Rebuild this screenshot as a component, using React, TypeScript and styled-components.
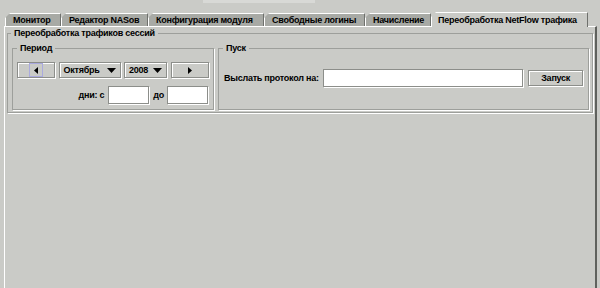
import styled, { createGlobalStyle } from "styled-components";

const GlobalStyle = createGlobalStyle`
    html, body {
        margin: 0;
        padding: 0;
        background: #cacbc7;
    }
    body {
        font-family: "Liberation Sans", Arial, sans-serif;
        font-size: 9px;
        font-weight: bold;
        letter-spacing: -0.25px;
        color: #000;
    }
`;

const Window = styled.div`
    width: 600px;
    height: 288px;
    overflow: hidden;
    display: flex;
    flex-direction: column;
    background: #cacbc7;
`;

const TopStrip = styled.div`
    height: 12px;
    display: flex;
`;

const StripLight = styled.div`
    margin-left: 203px;
    width: 112px;
    height: 3px;
    background: #d8d9d6;
`;

const TabBar = styled.div`
    height: 14px;
    display: flex;
    align-items: flex-end;
    padding-left: 5px;
`;

const Tab = styled.div<{ $active?: boolean; $w: number }>`
    box-sizing: border-box;
    width: ${(p) => p.$w}px;
    height: ${(p) => (p.$active ? 15 : 13)}px;
    margin-bottom: ${(p) => (p.$active ? -1 : 0)}px;
    position: relative;
    z-index: ${(p) => (p.$active ? 2 : 1)};
    background: ${(p) => (p.$active ? "#cacbc7" : "#a8aaa5")};
    border-top: 1px solid #fff;
    border-left: 1px solid #fff;
    border-right: 1px solid #6f716d;
    clip-path: polygon(5px 0, 100% 0, 100% 100%, 0 100%, 0 5px);
    display: flex;
    align-items: center;
    padding-left: ${(p) => (p.$active ? 6 : 7)}px;
    padding-bottom: ${(p) => (p.$active ? 1 : 0)}px;
    white-space: nowrap;
`;

const Panel = styled.div`
    flex: 1;
    margin-left: 4px;
    width: 593px;
    box-sizing: border-box;
    border-top: 1px solid #fff;
    border-left: 1px solid #fff;
    border-right: 2px solid #5f615d;
    padding: 0 2px 0 2px;
`;

const Group = styled.fieldset`
    margin: 0;
    padding: 0;
    min-width: 0;
    border: 1px solid #9d9f9b;
    box-shadow: 1px 1px 0 #fff;
`;

const Title = styled.legend<{ $inset?: number }>`
    margin-left: ${(p) => p.$inset ?? 3}px;
    padding: 0 3px;
    line-height: 12px;
`;

const OuterBody = styled.div`
    display: grid;
    grid-template-columns: 202px 1fr;
    gap: 4px;
    padding: 3px 3px 2px 4px;
`;

const PeriodBody = styled.div`
    display: flex;
    flex-direction: column;
    gap: 8px;
    padding: 8px 4px 5px 4px;
`;

const Row = styled.div`
    display: flex;
    align-items: center;
`;

const DaysRow = styled(Row)`
    justify-content: flex-end;
    padding-right: 1px;
`;

const Button = styled.button<{ $w: number }>`
    box-sizing: border-box;
    width: ${(p) => p.$w}px;
    height: 16px;
    margin: 0;
    padding: 0;
    background: #cacbc7;
    border: 1px solid #8c8e8a;
    box-shadow: inset 1px 1px 0 #fff, 1px 1px 0 #fff;
    display: flex;
    align-items: center;
    justify-content: center;
    font-family: inherit;
    font-size: 9px;
    font-weight: bold;
    letter-spacing: -0.25px;
    color: #000;
`;

const Focus = styled.span`
    box-sizing: border-box;
    width: 14px;
    height: 14px;
    border: 1px solid #aaaade;
    display: flex;
    align-items: center;
    justify-content: center;
`;

const Combo = styled.div<{ $w: number }>`
    box-sizing: border-box;
    width: ${(p) => p.$w}px;
    height: 16px;
    border: 1px solid #8c8e8a;
    box-shadow: inset 1px 1px 0 #fff, 1px 1px 0 #fff;
    display: flex;
    align-items: center;
    justify-content: space-between;
    padding: 0 4px 0 4px;
`;

const Field = styled.div<{ $w: number }>`
    box-sizing: border-box;
    width: ${(p) => p.$w}px;
    height: 18px;
    background: #fff;
    border: 1px solid #8c8e8a;
    box-shadow: 1px 1px 0 #fff;
`;

const Label = styled.span<{ $ml?: number; $mr?: number }>`
    margin-left: ${(p) => p.$ml ?? 0}px;
    margin-right: ${(p) => p.$mr ?? 0}px;
    white-space: nowrap;
`;

const StartBody = styled.div`
    display: flex;
    align-items: center;
    padding: 15px 5px 0 5px;
`;

const Arrow = ({ dir }: { dir: "left" | "right" | "down" }) => {
    if (dir === "down") {
        return (
            <svg width="9" height="5" viewBox="0 0 9 5">
                <polygon points="0,0 9,0 4.5,5" fill="#000" />
            </svg>
        );
    }
    return (
        <svg width="4" height="7" viewBox="0 0 4 7">
            <polygon points={dir === "left" ? "4,0 4,7 0,3.5" : "0,0 0,7 4,3.5"} fill="#000" />
        </svg>
    );
};

const tabs = [
    { name: "Монитор", w: 56 },
    { name: "Редактор NASов", w: 87 },
    { name: "Конфигурация модуля", w: 116 },
    { name: "Свободные логины", w: 101 },
    { name: "Начисление", w: 66 },
];

const App = () => {
    return (
        <Window>
            <GlobalStyle />
            <TopStrip>
                <StripLight />
            </TopStrip>
            <TabBar>
                {tabs.map((t) => (
                    <Tab key={t.name} $w={t.w}>
                        {t.name}
                    </Tab>
                ))}
                <Tab $active $w={157}>
                    Переобработка NetFlow трафика
                </Tab>
            </TabBar>
            <Panel>
                <Group>
                    <Title>Переобработка трафиков сессий</Title>
                    <OuterBody>
                        <Group>
                            <Title $inset={4}>Период</Title>
                            <PeriodBody>
                                <Row>
                                    <Button $w={38}>
                                        <Focus>
                                            <Arrow dir="left" />
                                        </Focus>
                                    </Button>
                                    <Combo $w={63} style={{ marginLeft: 4 }}>
                                        Октябрь
                                        <Arrow dir="down" />
                                    </Combo>
                                    <Combo $w={44} style={{ marginLeft: 3 }}>
                                        2008
                                        <Arrow dir="down" />
                                    </Combo>
                                    <Button $w={38} style={{ marginLeft: 4 }}>
                                        <Arrow dir="right" />
                                    </Button>
                                </Row>
                                <DaysRow>
                                    <Label $mr={4}>дни: с</Label>
                                    <Field $w={41} />
                                    <Label $ml={4} $mr={3}>
                                        до
                                    </Label>
                                    <Field $w={41} />
                                </DaysRow>
                            </PeriodBody>
                        </Group>
                        <Group>
                            <Title $inset={4}>Пуск</Title>
                            <StartBody>
                                <Label $mr={4}>Выслать протокол на:</Label>
                                <Field $w={202} />
                                <Button $w={55} style={{ marginLeft: 5 }}>
                                    Запуск
                                </Button>
                            </StartBody>
                        </Group>
                    </OuterBody>
                </Group>
            </Panel>
        </Window>
    );
};

export default App;
